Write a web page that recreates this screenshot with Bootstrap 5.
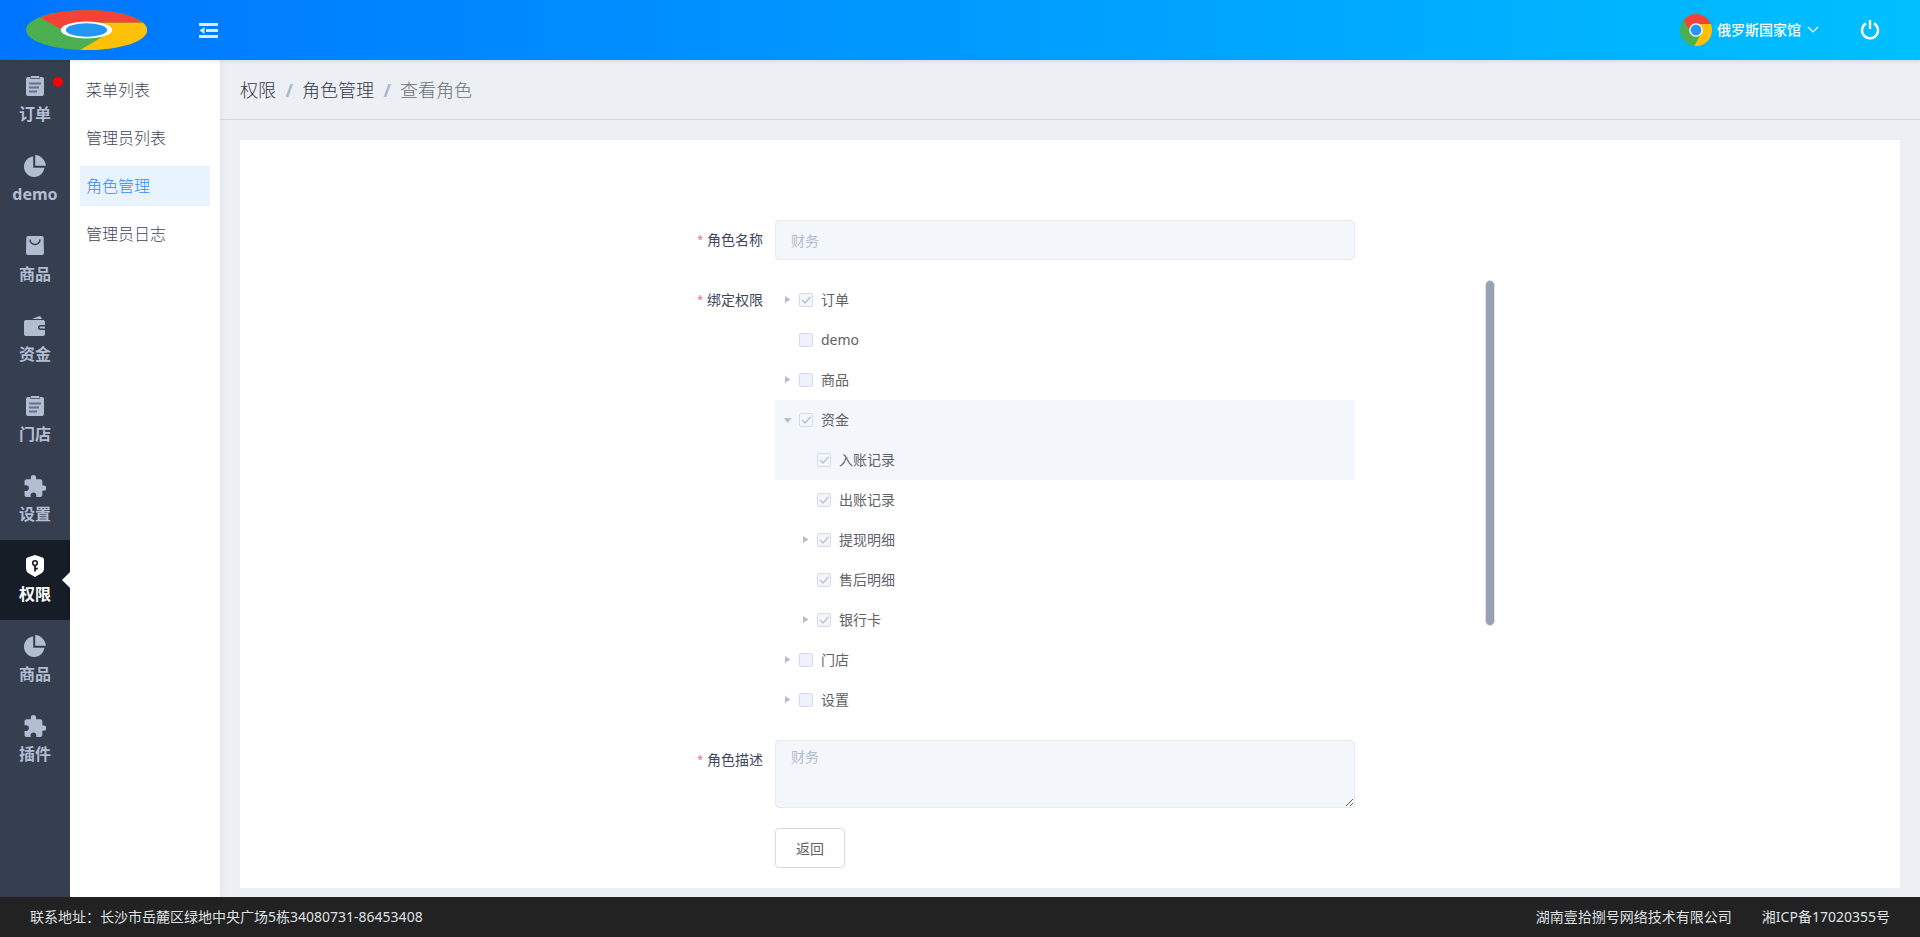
<!DOCTYPE html>
<html lang="zh-CN">
<head>
<meta charset="utf-8">
<meta name="viewport" content="width=device-width, initial-scale=1">
<title>查看角色</title>
<link href="https://cdn.jsdelivr.net/npm/bootstrap@5.3.0/dist/css/bootstrap.min.css" rel="stylesheet">
<style>
  body { font-family: "Noto Sans", "Noto Sans CJK SC", sans-serif; font-size: 14px; line-height: 20px; color: #606266; background: #ecf0f5; }
  a { text-decoration: none; }
  .topbar { height: 60px; background: linear-gradient(90deg, #0075ff, #00c0ff); box-shadow: 0 1px 4px rgba(0,21,41,.12); z-index: 2; }
  .brand { width: 173px; }
  .icon-btn { background: none; border: 0; padding: 0; color: #fff; line-height: 0; }
  .user-btn { background: none; border: 0; padding: 0; gap: 5px; color: #fff; font-weight: 500; }
  .power-btn { margin: 0 40px; }
  .mainnav { width: 70px; background: #353f4f; }
  .mainnav a { height: 80px; padding-top: 15px; color: #b3bdd2; font-size: 16px; font-weight: 700; line-height: 32px; }
  .mainnav svg { width: 22px; height: 22px; margin-bottom: 1px; }
  .mainnav a.active { background: #161d26; color: #fff; }
  .mainnav a.active::after { content: ""; position: absolute; right: 0; top: 32px; border: 8px solid transparent; border-right-color: #fff; border-left: 0; }
  .dot { position: absolute; right: 7px; top: 17px; width: 10px; height: 10px; background: #f00; border-radius: 50%; }
  .subnav { width: 150px; padding: 10px; gap: 8px; background: #fff; box-shadow: 1px 0 6px rgba(0,21,41,.06); z-index: 1; }
  .subnav a { height: 40px; padding-left: 6px; line-height: 40px; font-size: 16px; font-weight: 300; color: #41465c; }
  .subnav a.active { background: #e8f3ff; color: #2d8cff; }
  .crumbs { height: 60px; padding: 0 20px; border-bottom: 1px solid #d0d7e5; }
  .crumbs .breadcrumb { --bs-breadcrumb-divider-color: #a9b6cf; --bs-breadcrumb-item-padding-x: 9px; font-size: 18px; font-weight: 300; }
  .crumbs a { color: #303645; }
  .crumbs .active { color: #6a6e76; }
  .crumbs .breadcrumb-item + .breadcrumb-item::before { width: 17px; margin-right: 9px; padding: 0; text-align: right; font-weight: 700; }
  .crumbs .breadcrumb-item + .breadcrumb-item { padding-left: 0; }
  .page-body { padding: 20px 20px 9px; }
  .panel { background: #fff; padding: 80px 0 20px; }
  .role-form { margin-left: 25%; gap: 20px; }
  .field-label { width: 120px; padding-right: 12px; line-height: 40px; text-align: right; color: #41465c; flex-shrink: 0; }
  .field-label::before { content: "*"; font-family: "Liberation Sans", sans-serif; color: #f56c6c; margin-right: 4px; }
  .field { width: 580px; padding: 5px 15px; font-size: 14px; border: 1px solid #e6e9ee; border-radius: 4px; }
  .field:disabled { background: #f3f6fa; color: #b4bccf; opacity: 1; }
  .field-line { height: 40px; }
  .field-area { height: 68px; line-height: 22px; }
  .tree-wrap { width: 720px; height: 440px; }
  .tree-list { width: 580px; }
  .tree-row { height: 40px; padding-left: 24px; }
  .tree-row.level2 { padding-left: 42px; }
  .tree-row.shaded { background: #f3f6fa; }
  .tree-row.parent { padding-left: 6px; }
  .tree-row.parent.level2 { padding-left: 24px; }
  .caret { width: 18px; height: 18px; border: 0; padding: 0; background: none; line-height: 0; color: #b4bfd3; }
  .tree-row .form-check-input { width: 14px; height: 14px; margin: 0; border: 1px solid #d6dbea; border-radius: 2px; background-color: #edf2fc; opacity: 1; }
  .tree-row .form-check-input:checked { background-color: #f3f6fa; background-size: 12px; background-image: url("data:image/svg+xml,%3Csvg xmlns='http://www.w3.org/2000/svg' viewBox='0 0 12 12'%3E%3Cpath d='M2 6l3 3 5.500-6' fill='none' stroke='%23b6bfd3' stroke-width='1.300'/%3E%3C/svg%3E"); }
  .tree-row .form-check-input:disabled ~ label { margin-left: 8px; opacity: 1; }
  .scroll-thumb { width: 10px; height: 346px; background: #98a0b5; border: 1px solid #e0e0e4; border-radius: 5px; }
  .back-btn { height: 40px; width: 70px; padding: 0; font-size: 14px; color: #606266; background: #fff; border: 1px solid #d5daea; border-radius: 4px; margin-left: 120px; }
  .foot { height: 40px; padding: 0 30px; gap: 30px; background: #222; color: #dfe0e2; }
</style>
</head>
<body class="min-vh-100 d-flex flex-column">

<svg class="d-none">
  <symbol id="i-clip" viewBox="0 0 22 22"><path d="M4 2h14q2 0 2 2v15q0 2-2 2H4q-2 0-2-2V4q0-2 2-2z"/><path d="M6 1.500h10V4H6z" fill="#566177"/><path d="M7.500 1h7q.8 0 .8.800v1.200H6.700V1.800q0-.8.800-.800z"/><path d="M5 8.500h12M5 12.500h10M5 16.500h8" stroke="#667288" stroke-width="1.800"/></symbol>
  <symbol id="i-pie" viewBox="2 0.5 21.5 21.5"><path d="M11 2.050V13h10.950c-.501 5.053-4.765 9-9.950 9-5.523 0-10-4.477-10-10 0-5.185 3.947-9.449 9-9.950zm2-1.507C18.553 1.020 22.979 5.447 23.457 11H13V.543z"/></symbol>
  <symbol id="i-bag" viewBox="0 0 22 22"><path d="M4 1h14q1.500 0 1.600 1.500L20 18q0 2-2 2H4q-2 0-2-2L2.400 2.500Q2.500 1 4 1z"/><path d="M6 4.500a5 5 0 0 0 10 0" fill="none" stroke="#353f4f" stroke-width="1.500"/></symbol>
  <symbol id="i-wallet" viewBox="0 0 22 22"><path d="M8 4l7-2.800q1.500-.3 2 1l1 1.800zM2 5h17q2 0 2 2v3h-4.500a2.500 2.500 0 0 0 0 5H21v4q0 2-2 2H2q-2 0-2-2V7q0-2 2-2zM16.500 11.500h4.500v2h-4.500a1 1 0 0 1 0-2z"/></symbol>
  <symbol id="i-puzzle" viewBox="1.5 1 21 21"><path d="M20.500 11H19V7a2 2 0 0 0-2-2h-4V3.500a2.500 2.500 0 0 0-5 0V5H4a2 2 0 0 0-2 2v3.800h1.500a2.700 2.700 0 0 1 0 5.400H2V20a2 2 0 0 0 2 2h3.800v-1.500a2.700 2.700 0 0 1 5.400 0V22H17a2 2 0 0 0 2-2v-4h1.500a2.500 2.500 0 0 0 0-5z"/></symbol>
  <symbol id="i-shield" viewBox="0 0 22 22"><path d="M11 0l7.500 2.500q1.500.5 1.500 2V13q0 3.500-3 5.500l-6 3.500-6-3.500q-3-2-3-5.500V4.500q0-1.500 1.500-2z"/><path d="M11 10.500V16.500M11 13.700h2.800" stroke="#161d26" stroke-width="1.800"/><circle cx="11" cy="8" r="2.300" fill="none" stroke="#161d26" stroke-width="1.600"/></symbol>
  <symbol id="i-chrome" viewBox="0 0 48 48"><circle cx="24" cy="24" r="24" fill="#4caf50"/><path fill="#ffc107" d="M24 15h22.300A24 24 0 0 1 21.500 48L32 29z"/><path fill="#f44336" d="M46.300 15H24l-9.500 9L5.500 9a24 24 0 0 1 40.800 6z"/><circle cx="24" cy="24" r="10.200" fill="#fff"/><circle cx="24" cy="24" r="8.200" fill="#2196f3"/></symbol>
  <symbol id="i-right" viewBox="0 0 18 18"><path d="M4 5l5.500 3.500L4 12z"/></symbol>
  <symbol id="i-down" viewBox="0 0 18 18"><path d="M3 7h7.500L6.700 12z"/></symbol>
</svg>

<header class="topbar d-flex align-items-center position-relative">
  <a href="#" class="brand text-center" aria-label="首页"><svg width="121" height="40" preserveAspectRatio="none" viewBox="0 0 48 48"><circle cx="24" cy="24" r="24" fill="#4caf50"/><path fill="#ffc107" d="M24 15h22.300A24 24 0 0 1 21.500 48L32 29z"/><path fill="#f44336" d="M46.300 15H24l-9.500 9L5.500 9a24 24 0 0 1 40.800 6z"/><circle cx="24" cy="24" r="10.200" fill="#fff"/><circle cx="24" cy="24" r="8.200" fill="#2196f3"/></svg></a>
  <button class="icon-btn ms-4" type="button" aria-label="收起菜单"><svg width="24" height="20" viewBox="0 0 24 20" fill="#d4eaff"><path d="M2 3h19v3H2zM9 9h12v3H9zM2 15h19v3H2zM2.500 10.500l5-3.500v7z"/></svg></button>
  <button class="user-btn ms-auto d-flex align-items-center" type="button"><svg width="32" height="32"><use href="#i-chrome"/></svg><span>俄罗斯国家馆</span><svg width="14" height="14" viewBox="0 0 14 14"><path d="M2 4l5 5 5-5" fill="none" stroke="#fff" stroke-width="1.200"/></svg></button>
  <button class="icon-btn power-btn" type="button" aria-label="退出"><svg width="20" height="20" viewBox="0 0 20 20" fill="none" stroke="#fff" stroke-width="2.400"><path d="M6 3.400a8 8 0 1 0 8 0M10 0v9"/></svg></button>
</header>

<div class="d-flex flex-grow-1">
  <nav class="mainnav d-flex flex-column flex-shrink-0">
    <a href="#" class="position-relative d-flex flex-column align-items-center"><svg fill="currentColor"><use href="#i-clip"/></svg>订单<span class="dot"></span></a>
    <a href="#" class="d-flex flex-column align-items-center"><svg fill="currentColor"><use href="#i-pie"/></svg>demo</a>
    <a href="#" class="d-flex flex-column align-items-center"><svg fill="currentColor"><use href="#i-bag"/></svg>商品</a>
    <a href="#" class="d-flex flex-column align-items-center"><svg fill="currentColor"><use href="#i-wallet"/></svg>资金</a>
    <a href="#" class="d-flex flex-column align-items-center"><svg fill="currentColor"><use href="#i-clip"/></svg>门店</a>
    <a href="#" class="d-flex flex-column align-items-center"><svg fill="currentColor"><use href="#i-puzzle"/></svg>设置</a>
    <a href="#" class="active position-relative d-flex flex-column align-items-center"><svg fill="currentColor"><use href="#i-shield"/></svg>权限</a>
    <a href="#" class="d-flex flex-column align-items-center"><svg fill="currentColor"><use href="#i-pie"/></svg>商品</a>
    <a href="#" class="d-flex flex-column align-items-center"><svg fill="currentColor"><use href="#i-puzzle"/></svg>插件</a>
  </nav>
  <nav class="subnav d-flex flex-column flex-shrink-0">
    <a href="#">菜单列表</a>
    <a href="#">管理员列表</a>
    <a href="#" class="active">角色管理</a>
    <a href="#">管理员日志</a>
  </nav>
  <main class="flex-grow-1">
    <nav class="crumbs d-flex align-items-center">
      <ol class="breadcrumb mb-0">
        <li class="breadcrumb-item"><a href="#">权限</a></li>
        <li class="breadcrumb-item"><a href="#">角色管理</a></li>
        <li class="breadcrumb-item active">查看角色</li>
      </ol>
    </nav>
    <div class="page-body">
      <div class="panel">
        <form class="role-form d-flex flex-column">
          <div class="d-flex">
            <label class="field-label" for="name">角色名称</label>
            <input id="name" class="form-control field field-line" value="财务" disabled>
          </div>
          <div class="d-flex">
            <span class="field-label" id="perm">绑定权限</span>
            <div class="tree-wrap d-flex justify-content-between" role="group" aria-labelledby="perm">
              <div class="tree-list">
                <div class="tree-row parent d-flex align-items-center"><button class="caret" type="button" aria-label="展开"><svg width="18" height="18" fill="currentColor"><use href="#i-right"/></svg></button><input class="form-check-input" type="checkbox" id="t1" checked disabled><label for="t1">订单</label></div>
                <div class="tree-row d-flex align-items-center"><input class="form-check-input" type="checkbox" id="t2" disabled><label for="t2">demo</label></div>
                <div class="tree-row parent d-flex align-items-center"><button class="caret" type="button" aria-label="展开"><svg width="18" height="18" fill="currentColor"><use href="#i-right"/></svg></button><input class="form-check-input" type="checkbox" id="t3" disabled><label for="t3">商品</label></div>
                <div class="tree-row parent shaded d-flex align-items-center"><button class="caret" type="button" aria-label="收起"><svg width="18" height="18" fill="currentColor"><use href="#i-down"/></svg></button><input class="form-check-input" type="checkbox" id="t4" checked disabled><label for="t4">资金</label></div>
                <div class="tree-row level2 shaded d-flex align-items-center"><input class="form-check-input" type="checkbox" id="t5" checked disabled><label for="t5">入账记录</label></div>
                <div class="tree-row level2 d-flex align-items-center"><input class="form-check-input" type="checkbox" id="t6" checked disabled><label for="t6">出账记录</label></div>
                <div class="tree-row parent level2 d-flex align-items-center"><button class="caret" type="button" aria-label="展开"><svg width="18" height="18" fill="currentColor"><use href="#i-right"/></svg></button><input class="form-check-input" type="checkbox" id="t7" checked disabled><label for="t7">提现明细</label></div>
                <div class="tree-row level2 d-flex align-items-center"><input class="form-check-input" type="checkbox" id="t8" checked disabled><label for="t8">售后明细</label></div>
                <div class="tree-row parent level2 d-flex align-items-center"><button class="caret" type="button" aria-label="展开"><svg width="18" height="18" fill="currentColor"><use href="#i-right"/></svg></button><input class="form-check-input" type="checkbox" id="t9" checked disabled><label for="t9">银行卡</label></div>
                <div class="tree-row parent d-flex align-items-center"><button class="caret" type="button" aria-label="展开"><svg width="18" height="18" fill="currentColor"><use href="#i-right"/></svg></button><input class="form-check-input" type="checkbox" id="t10" disabled><label for="t10">门店</label></div>
                <div class="tree-row parent d-flex align-items-center"><button class="caret" type="button" aria-label="展开"><svg width="18" height="18" fill="currentColor"><use href="#i-right"/></svg></button><input class="form-check-input" type="checkbox" id="t11" disabled><label for="t11">设置</label></div>
              </div>
              <div class="scroll-thumb"></div>
            </div>
          </div>
          <div class="d-flex">
            <label class="field-label" for="desc">角色描述</label>
            <textarea id="desc" class="form-control field field-area" disabled>财务</textarea>
          </div>
          <div><button class="btn back-btn" type="button">返回</button></div>
        </form>
      </div>
    </div>
  </main>
</div>

<footer class="foot d-flex align-items-center">
  <span class="me-auto">联系地址：长沙市岳麓区绿地中央广场5栋34080731-86453408</span>
  <span>湖南壹拾捌号网络技术有限公司</span>
  <span>湘ICP备17020355号</span>
</footer>
<script src="https://cdn.jsdelivr.net/npm/bootstrap@5.3.0/dist/js/bootstrap.bundle.min.js"></script>
</body>
</html>
